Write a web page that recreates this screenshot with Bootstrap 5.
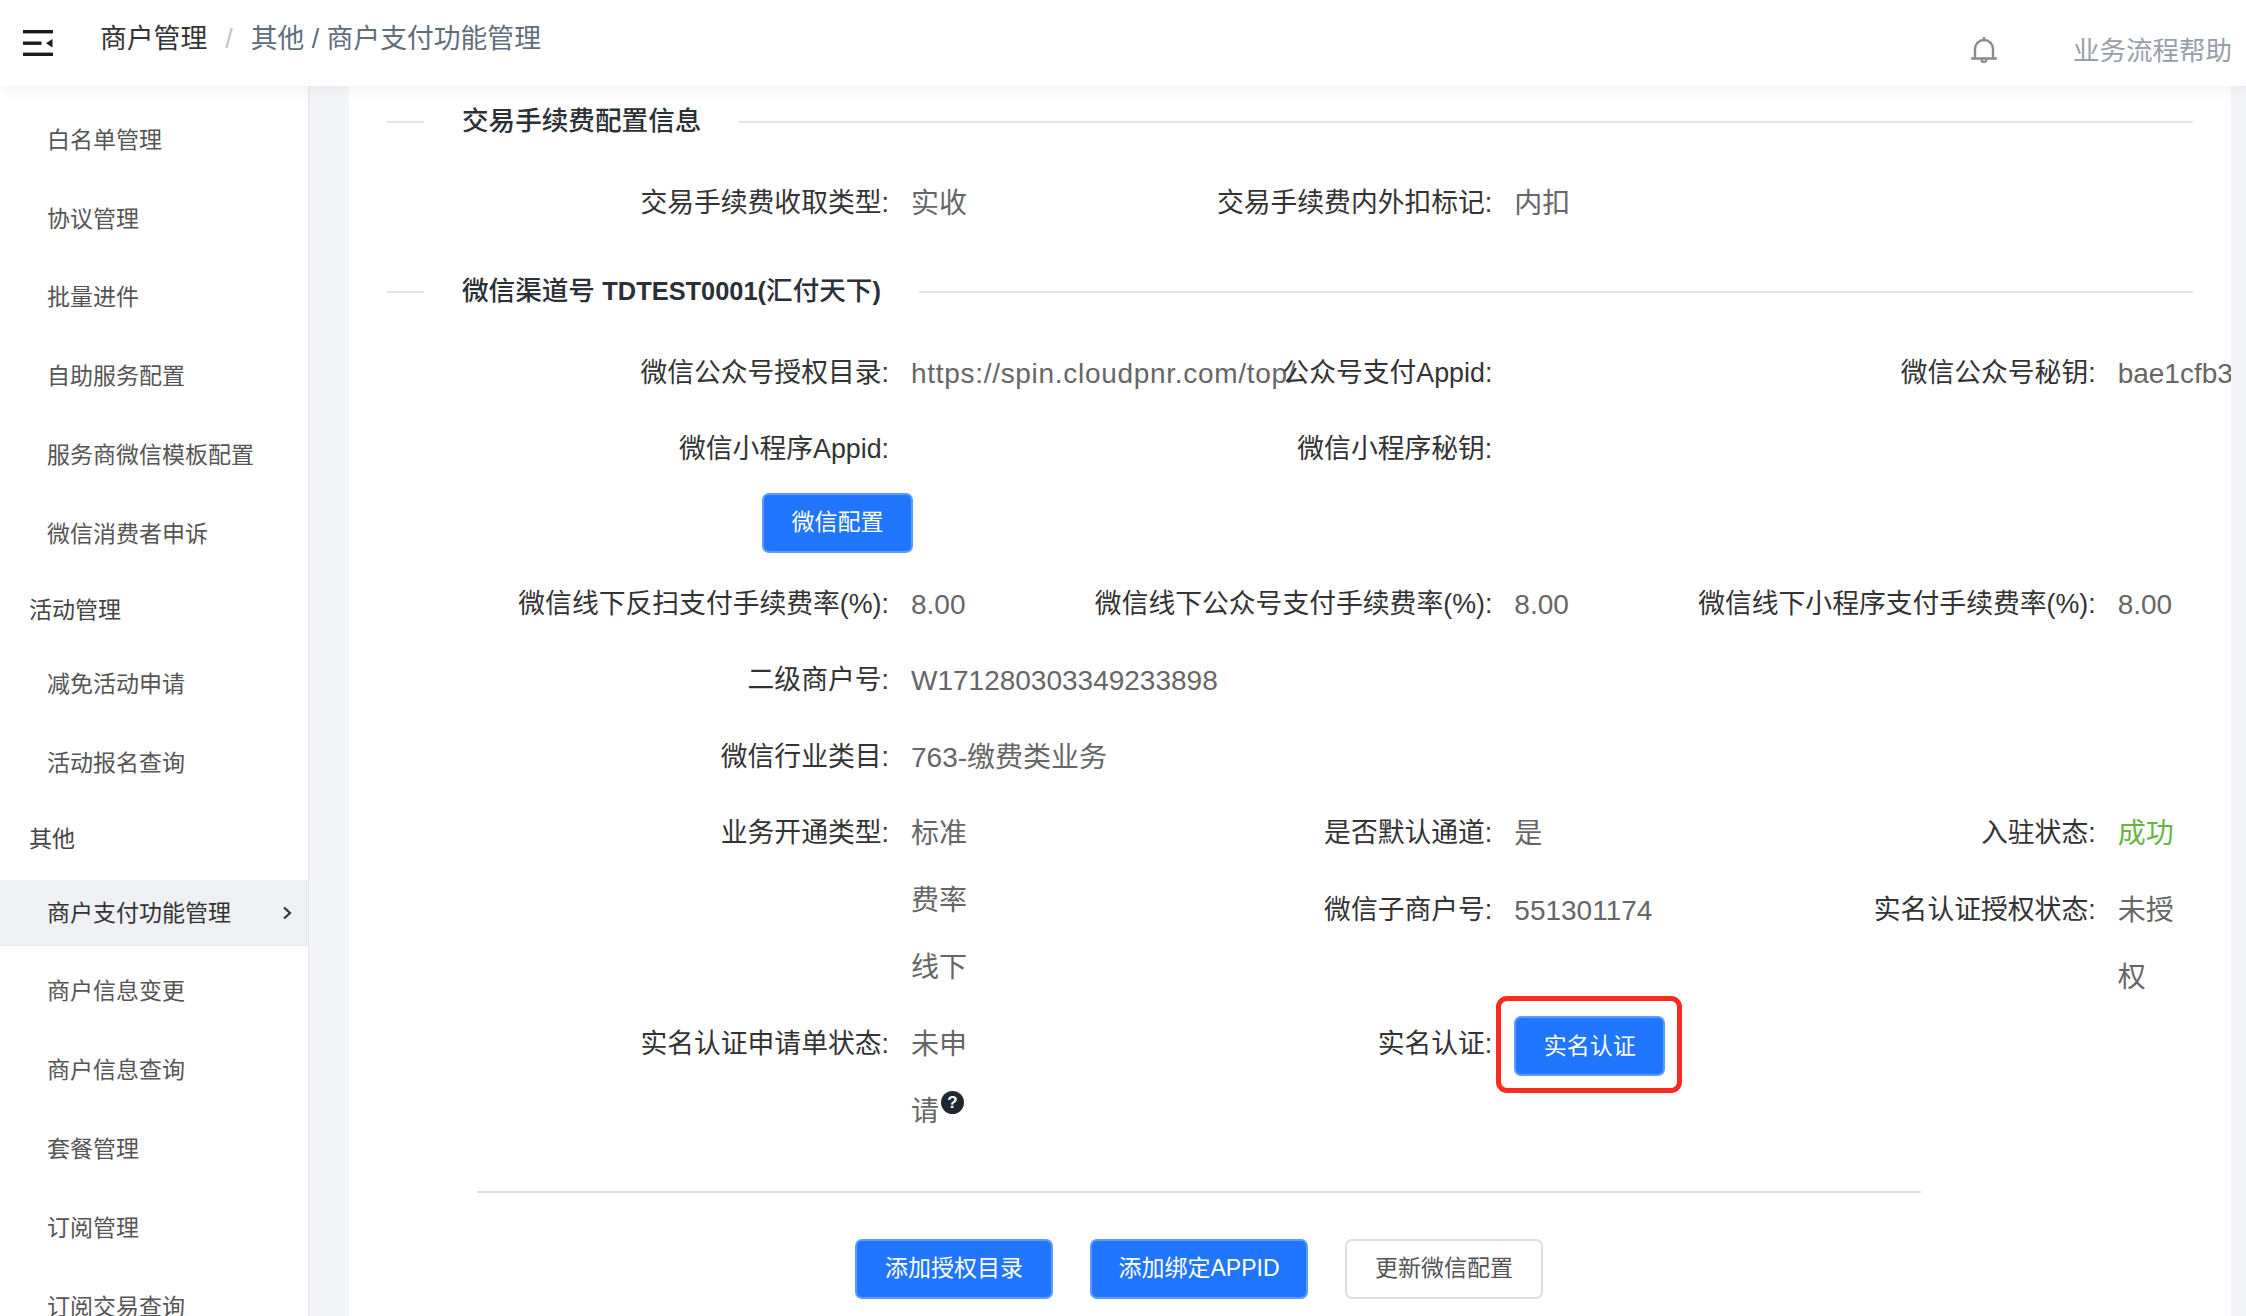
<!DOCTYPE html>
<html lang="zh-CN">
<head>
  <meta charset="UTF-8" />
  <meta name="viewport" content="width=device-width, initial-scale=1.0"/>
  <title>商户支付功能管理</title>
  <link href="https://cdn.jsdelivr.net/npm/bootstrap@5.3.0/dist/css/bootstrap.min.css" rel="stylesheet">
  <style>
    html, body {
      height: 100%;
      overflow: hidden;
    }
    body {
      background-color: #f4f5f8;
      color: #333;
      font-family: "Liberation Sans", "Noto Sans CJK SC", sans-serif;
    }
    .top-bar {
      height: 86px;
      flex: none;
      background-color: #fff;
      box-shadow: 0 2px 16px rgba(0, 0, 0, 0.07);
      position: relative;
      z-index: 2;
      padding-left: 23px;
      padding-right: 14px;
    }
    .crumb-box {
      margin-left: 47px;
      margin-bottom: 8px;
      font-size: 26.8px;
      color: #606d7c;
    }
    .crumb-box b {
      font-weight: 400;
      color: #333;
    }
    .crumb-box i {
      font-style: normal;
      color: #c0c4cc;
      margin: 0 18px;
    }
    .bell-icon {
      margin-top: 14px;
      margin-right: 76px;
    }
    .help-link {
      margin-top: 18px;
      font-size: 26.5px;
      color: #97a0aa;
    }
    .side-menu {
      width: 309px;
      flex: none;
      background-color: #fff;
      border-right: 1px solid #e6e6e6;
      padding-top: 21px;
      font-size: 23px;
      overflow: hidden;
    }
    .menu-item {
      height: 66px;
      margin-bottom: 12.8px;
      padding-left: 47px;
      padding-right: 16px;
      color: #555;
    }
    .menu-item.on {
      background-color: #eff0f4;
      color: #333;
    }
    .menu-group {
      height: 60.6px;
      margin-bottom: 10.7px;
      padding-left: 29px;
      color: #444;
    }
    .main-gutter {
      padding: 0 15px 0 40px;
      min-width: 0;
    }
    .main-panel {
      height: 100%;
      background-color: #fff;
      padding: 0 34px 0 38px;
      overflow: hidden;
    }
    .sec-title {
      height: 40px;
      margin-top: 16px;
      margin-right: 4px;
      margin-bottom: 28px;
      font-size: 26.6px;
      font-weight: 500;
      color: #2b2f36;
    }
    .sec-title + .info-row + .sec-title {
      margin-top: 34.5px;
    }
    .sec-title::before, .sec-title::after {
      content: "";
      height: 2px;
      background-color: #e4e4e4;
    }
    .sec-title::before {
      width: 37px;
      margin-right: 38px;
    }
    .sec-title::after {
      flex: 1;
      margin-left: 38px;
    }
    .latin-part {
      font-size: 25.4px;
      font-weight: 700;
    }
    .info-row {
      margin-bottom: 9.5px;
      line-height: 67px;
    }
    .tall-row {
      height: 210.5px;
    }
    .info-label {
      width: 502px;
      flex: none;
      margin-right: 22px;
      text-align: right;
      font-size: 26.8px;
      color: #333;
    }
    .info-val {
      width: 76px;
      flex: none;
      font-size: 28px;
      color: #666;
    }
    .no-wrap {
      white-space: nowrap;
    }
    .url-val {
      letter-spacing: .7px;
    }
    .val-ok {
      color: #67b346;
    }
    .tip-mark {
      display: inline-flex;
      align-items: center;
      justify-content: center;
      width: 23px;
      height: 23px;
      margin-left: 2px;
      border-radius: 50%;
      background-color: #1f2733;
      color: #fff;
      font-size: 17px;
      font-weight: 700;
      line-height: 1;
      vertical-align: 13px;
    }
    .blue-btn, .blue-btn:hover {
      height: 60px;
      padding: 0;
      font-size: 23px;
      color: #fff;
      background-color: #2176ff;
      border: 2px solid #5c9bff;
      border-radius: 7px;
    }
    .plain-btn, .plain-btn:hover {
      height: 60px;
      padding: 0;
      font-size: 23px;
      color: #555;
      background-color: #fff;
      border: 2px solid #dedede;
      border-radius: 7px;
    }
    .btn-w151 { width: 151px; }
    .btn-w198 { width: 198px; }
    .btn-w218 { width: 218px; }
    .wx-row {
      padding-left: 375px;
      margin-bottom: 18px;
    }
    .mark-wrap {
      position: relative;
      margin-top: 5.5px;
      height: 60px;
      display: inline-block;
      line-height: 1;
    }
    .red-box {
      position: absolute;
      left: -18px;
      top: -20px;
      width: 186px;
      height: 97px;
      border: 5px solid #fb2b20;
      border-radius: 11px;
    }
    .foot-box {
      width: 1444px;
      margin-left: 90px;
      margin-top: 46px;
    }
    .foot-line {
      height: 2px;
      margin: 0 0 46px;
      background-color: #dedede;
      border: 0;
      opacity: 1;
    }
    .foot-btns {
      gap: 37px;
    }
  </style>
</head>

<body class="d-flex flex-column">
  <header class="top-bar d-flex align-items-center">
    <svg width="30" height="26" viewBox="0 0 30 26" fill="#1c1c1c">
      <rect x="0" y="0" width="30" height="3.4"/>
      <rect x="0" y="11.5" width="18.5" height="3.4"/>
      <rect x="0" y="22.6" width="30" height="3.4"/>
      <polygon points="29.5,9 29.5,17.5 23,13.2"/>
    </svg>
    <div class="crumb-box"><b>商户管理</b><i>/</i>其他 / 商户支付功能管理</div>
    <svg class="bell-icon ms-auto" width="26" height="26" viewBox="0 0 26 26" fill="none" stroke="#8a8a8a" stroke-width="2.4">
      <path d="M4 21V12a9 9 0 0 1 18 0v9"/>
      <path d="M1 21.5h24" stroke-linecap="round"/>
      <path d="M10.5 22.5a2.5 2.5 0 0 0 5 0"/>
      <path d="M13 0.5v2.5" stroke-linecap="round"/>
    </svg>
    <div class="help-link">业务流程帮助</div>
  </header>

  <div class="d-flex flex-grow-1 overflow-hidden">
    <nav class="side-menu">
      <div class="menu-item d-flex align-items-center">白名单管理</div>
      <div class="menu-item d-flex align-items-center">协议管理</div>
      <div class="menu-item d-flex align-items-center">批量进件</div>
      <div class="menu-item d-flex align-items-center">自助服务配置</div>
      <div class="menu-item d-flex align-items-center">服务商微信模板配置</div>
      <div class="menu-item d-flex align-items-center">微信消费者申诉</div>
      <div class="menu-group d-flex align-items-center">活动管理</div>
      <div class="menu-item d-flex align-items-center">减免活动申请</div>
      <div class="menu-item d-flex align-items-center">活动报名查询</div>
      <div class="menu-group d-flex align-items-center">其他</div>
      <div class="menu-item on d-flex align-items-center justify-content-between">
        <span>商户支付功能管理</span>
        <svg width="10" height="14" viewBox="0 0 10 14" fill="none" stroke="#333" stroke-width="2.2"><path d="M2 1.5 8 7l-6 5.5"/></svg>
      </div>
      <div class="menu-item d-flex align-items-center">商户信息变更</div>
      <div class="menu-item d-flex align-items-center">商户信息查询</div>
      <div class="menu-item d-flex align-items-center">套餐管理</div>
      <div class="menu-item d-flex align-items-center">订阅管理</div>
      <div class="menu-item d-flex align-items-center">订阅交易查询</div>
    </nav>

    <main class="main-gutter flex-grow-1">
      <div class="main-panel">
        <div class="sec-title d-flex align-items-center">交易手续费配置信息</div>
        <div class="row g-0 info-row">
          <div class="col-4 d-flex"><div class="info-label">交易手续费收取类型:</div><div class="info-val">实收</div></div>
          <div class="col-4 d-flex"><div class="info-label">交易手续费内外扣标记:</div><div class="info-val">内扣</div></div>
        </div>

        <div class="sec-title d-flex align-items-center"><span>微信渠道号 <span class="latin-part">TDTEST0001(</span>汇付天下<span class="latin-part">)</span></span></div>
        <div class="row g-0 info-row">
          <div class="col-4 d-flex"><div class="info-label">微信公众号授权目录:</div><div class="info-val no-wrap url-val">https://spin.cloudpnr.com/top/</div></div>
          <div class="col-4 d-flex"><div class="info-label">公众号支付Appid:</div><div class="info-val"></div></div>
          <div class="col-4 d-flex"><div class="info-label">微信公众号秘钥:</div><div class="info-val no-wrap">bae1cfb3a7d29e04</div></div>
        </div>
        <div class="row g-0 info-row">
          <div class="col-4 d-flex"><div class="info-label">微信小程序Appid:</div><div class="info-val"></div></div>
          <div class="col-4 d-flex"><div class="info-label">微信小程序秘钥:</div><div class="info-val"></div></div>
        </div>
        <div class="wx-row"><button type="button" class="btn blue-btn btn-w151">微信配置</button></div>
        <div class="row g-0 info-row">
          <div class="col-4 d-flex"><div class="info-label">微信线下反扫支付手续费率(%):</div><div class="info-val">8.00</div></div>
          <div class="col-4 d-flex"><div class="info-label">微信线下公众号支付手续费率(%):</div><div class="info-val">8.00</div></div>
          <div class="col-4 d-flex"><div class="info-label">微信线下小程序支付手续费率(%):</div><div class="info-val">8.00</div></div>
        </div>
        <div class="row g-0 info-row">
          <div class="col-4 d-flex"><div class="info-label">二级商户号:</div><div class="info-val no-wrap">W171280303349233898</div></div>
        </div>
        <div class="row g-0 info-row">
          <div class="col-4 d-flex"><div class="info-label">微信行业类目:</div><div class="info-val no-wrap">763-缴费类业务</div></div>
        </div>

        <div class="row g-0 tall-row">
          <div class="col-4 d-flex info-row"><div class="info-label">业务开通类型:</div><div class="info-val">标准费率线下</div></div>
          <div class="col-8">
            <div class="row g-0">
              <div class="col-6 d-flex info-row"><div class="info-label">是否默认通道:</div><div class="info-val">是</div></div>
              <div class="col-6 d-flex info-row"><div class="info-label">入驻状态:</div><div class="info-val val-ok">成功</div></div>
              <div class="col-6 d-flex info-row"><div class="info-label">微信子商户号:</div><div class="info-val no-wrap">551301174</div></div>
              <div class="col-6 d-flex info-row"><div class="info-label">实名认证授权状态:</div><div class="info-val">未授权</div></div>
            </div>
          </div>
        </div>
        <div class="row g-0 info-row">
          <div class="col-4 d-flex"><div class="info-label">实名认证申请单状态:</div><div class="info-val">未申请<span class="tip-mark">?</span></div></div>
          <div class="col-4 d-flex">
            <div class="info-label">实名认证:</div>
            <div class="mark-wrap">
              <button type="button" class="btn blue-btn btn-w151">实名认证</button>
              <div class="red-box"></div>
            </div>
          </div>
        </div>

        <div class="foot-box">
          <hr class="foot-line">
          <div class="foot-btns d-flex justify-content-center">
            <button type="button" class="btn blue-btn btn-w198">添加授权目录</button>
            <button type="button" class="btn blue-btn btn-w218">添加绑定APPID</button>
            <button type="button" class="btn plain-btn btn-w198">更新微信配置</button>
          </div>
        </div>
      </div>
    </main>
  </div>

  <script src="https://cdn.jsdelivr.net/npm/bootstrap@5.3.0/dist/js/bootstrap.bundle.min.js"></script>
</body>
</html>
